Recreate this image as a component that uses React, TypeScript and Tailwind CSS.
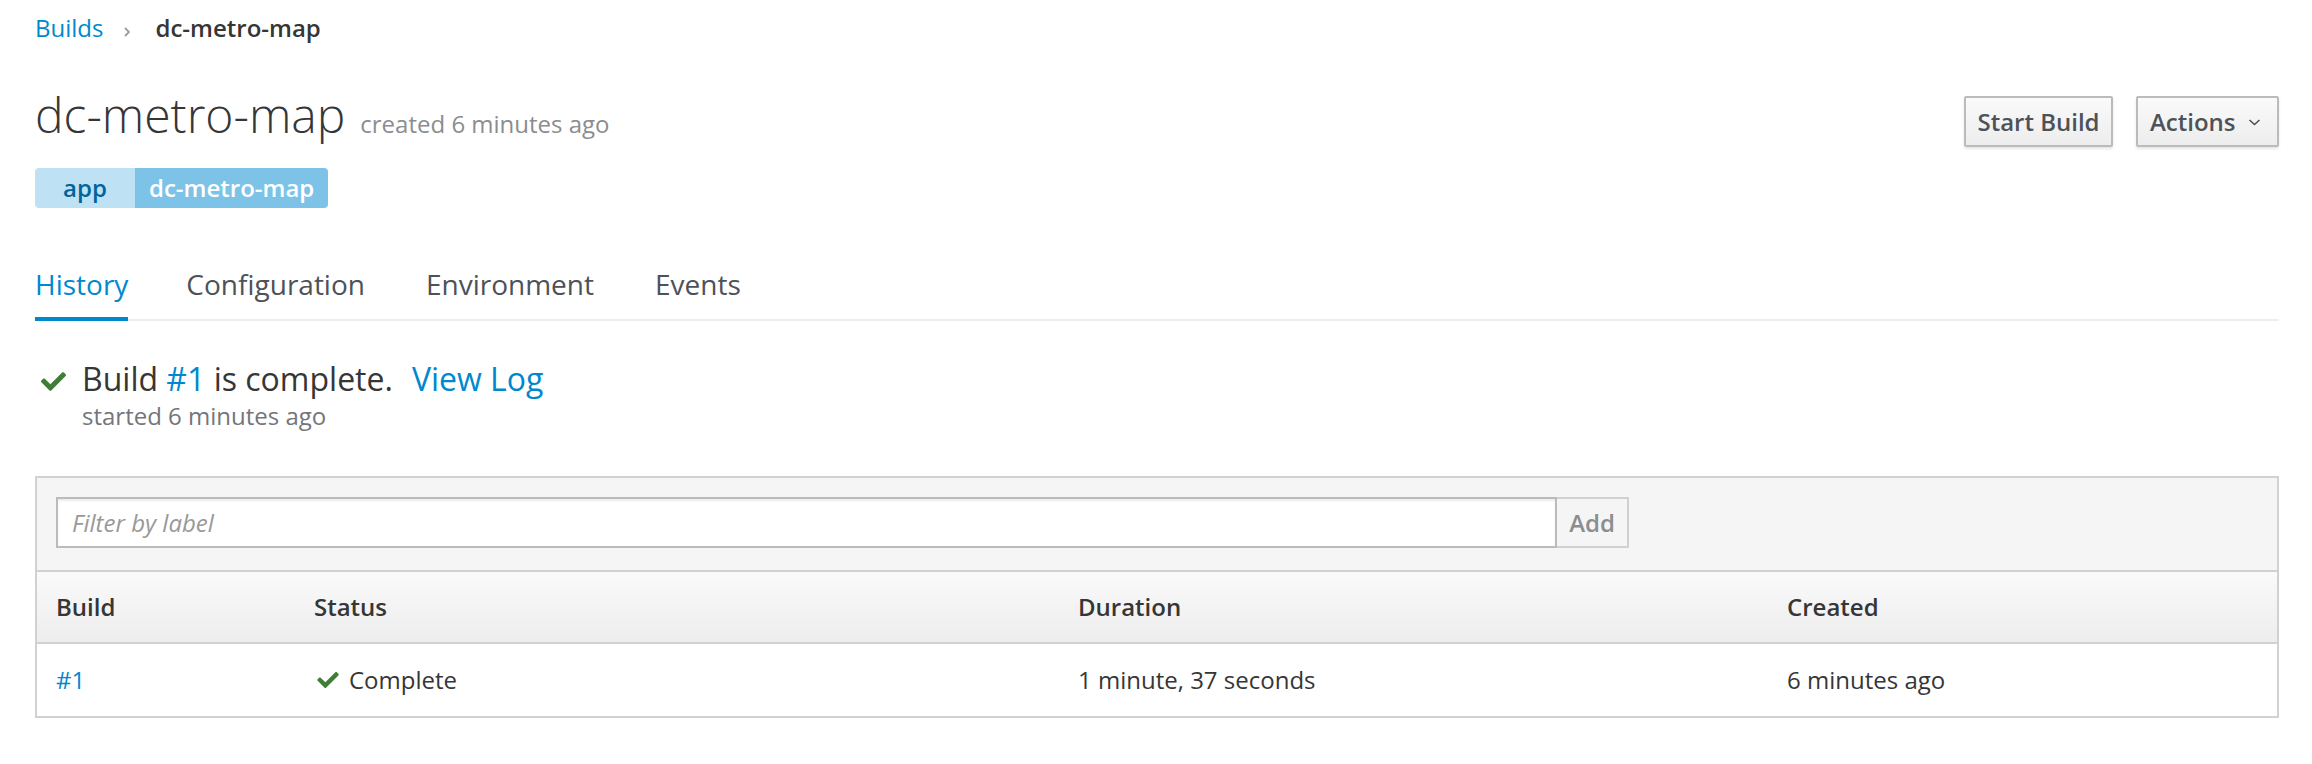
import React from "react";

const CheckIcon = ({ className }: { className?: string }) => (
  <svg viewBox="0 64 512 384" className={className} fill="currentColor">
    <path d="M173.898 439.404l-166.4-166.4c-9.997-9.997-9.997-26.206 0-36.204l36.203-36.204c9.997-9.998 26.207-9.998 36.204 0L192 312.69 432.095 72.596c9.997-9.997 26.207-9.997 36.204 0l36.203 36.204c9.997 9.997 9.997 26.206 0 36.204l-294.4 294.401c-9.998 9.997-26.207 9.997-36.204-.001z" />
  </svg>
);

const tabs = ["History", "Configuration", "Environment", "Events"];

function App() {
  return (
    <div className="min-h-screen bg-white pl-[35px] pr-[33px] font-['Open_Sans',sans-serif] text-[#363636]">
      {/* breadcrumb */}
      <nav className="flex items-center pt-[12px] text-[24px] leading-[32px]">
        <a className="text-[#0088ce]">Builds</a>
        <svg
          viewBox="0 0 6 10"
          className="ml-[21px] mr-[25px] mt-[7px] h-[10px] w-[6px] text-[#9c9c9c]"
          fill="none"
          stroke="currentColor"
          strokeWidth="1.8"
        >
          <path d="M1 1l4 4-4 4" />
        </svg>
        <span className="font-semibold">dc-metro-map</span>
      </nav>

      {/* title */}
      <div className="mt-[44px] flex justify-between">
        <div>
          <div className="flex items-baseline">
            <h1 className="text-[48px] font-light leading-[54px]">dc-metro-map</h1>
            <span className="ml-[15px] text-[24px] text-[#8b8d8f]">created 6 minutes ago</span>
          </div>
          <div className="mt-[26px] flex h-[40px] text-[24px] font-semibold">
            <span className="flex w-[100px] items-center justify-center rounded-l-[4px] bg-[#bee1f4] text-[#00659c]">
              app
            </span>
            <span className="flex items-center rounded-r-[4px] bg-[#7dc3e8] px-[14px] text-white">
              dc-metro-map
            </span>
          </div>
        </div>
        <div className="mt-[8px] flex gap-[23px] text-[24px] font-semibold text-[#4d5258]">
          <button className="h-[51px] w-[149px] rounded-[2px] border-2 border-[#bbb] bg-gradient-to-b from-[#fafafa] to-[#ededed] shadow-[0_2px_3px_rgba(3,3,3,0.1)]">
            Start Build
          </button>
          <button className="flex h-[51px] w-[143px] items-center rounded-[2px] border-2 border-[#bbb] bg-gradient-to-b from-[#fafafa] to-[#ededed] pl-[12px] shadow-[0_2px_3px_rgba(3,3,3,0.1)]">
            Actions
            <svg
              viewBox="0 0 13 7"
              className="ml-[12px] mt-[2px] h-[7px] w-[13px]"
              fill="none"
              stroke="currentColor"
              strokeWidth="1.6"
            >
              <path d="M1.5 1l5 4.5 5-4.5" />
            </svg>
          </button>
        </div>
      </div>

      {/* tabs */}
      <div className="mt-[58px] flex border-b-2 border-[#ededed] text-[28px] leading-[37px]">
        {tabs.map((t, i) => (
          <div
            key={t}
            className={`relative pb-[16px] ${i === 0 ? "mr-[58px] text-[#0088ce]" : "mr-[61px] text-[#4d5258]"}`}
          >
            {t}
            {i === 0 && <div className="absolute -bottom-[2px] left-0 right-0 h-[4px] bg-[#0088ce]" />}
          </div>
        ))}
      </div>

      {/* latest build status */}
      <div className="mt-[37px] flex">
        <div className="w-[47px] pl-[6px] pt-[14px]">
          <CheckIcon className="h-[19px] w-[25px] text-[#3f7e37]" />
        </div>
        <div>
          <div className="text-[32px] leading-[42px]">
            Build <a className="text-[#0088ce]">#1</a> is complete.
            <a className="ml-[19px] text-[#0088ce]">View Log</a>
          </div>
          <div className="text-[24px] leading-[32px] text-[#72767b]">started 6 minutes ago</div>
        </div>
      </div>

      {/* builds table */}
      <div className="mt-[44px] border-2 border-[#d1d1d1] text-[24px]">
        <div className="flex border-b-2 border-[#d1d1d1] bg-[#f5f5f5] pb-[22px] pl-[19px] pt-[19px]">
          <input
            className="h-[51px] w-[1501px] border-2 border-[#bbb] bg-white pl-[14px] shadow-[inset_0_2px_2px_rgba(3,3,3,0.075)] outline-none placeholder:italic placeholder:text-[#999]"
            placeholder="Filter by label"
          />
          <button className="h-[51px] w-[72px] border-y-2 border-r-2 border-[#d1d1d1] bg-[#f5f5f5] font-semibold text-[#8b8d8f]">
            Add
          </button>
        </div>
        <div className="grid h-[72px] grid-cols-[258px_764px_709px_1fr] items-center border-b-2 border-[#d1d1d1] bg-gradient-to-b from-[#fafafa] to-[#ededed] font-semibold">
          <div className="pl-[19px]">Build</div>
          <div className="pl-[19px]">Status</div>
          <div className="pl-[19px]">Duration</div>
          <div className="pl-[19px]">Created</div>
        </div>
        <div className="grid h-[72px] grid-cols-[258px_764px_709px_1fr] items-center">
          <div className="pl-[19px]">
            <a className="text-[#0088ce]">#1</a>
          </div>
          <div className="flex items-center pl-[22px]">
            <CheckIcon className="h-[16px] w-[22px] text-[#3f7e37]" />
            <span className="ml-[10px]">Complete</span>
          </div>
          <div className="pl-[19px]">1 minute, 37 seconds</div>
          <div className="pl-[19px]">6 minutes ago</div>
        </div>
      </div>
    </div>
  );
}

export default App;
